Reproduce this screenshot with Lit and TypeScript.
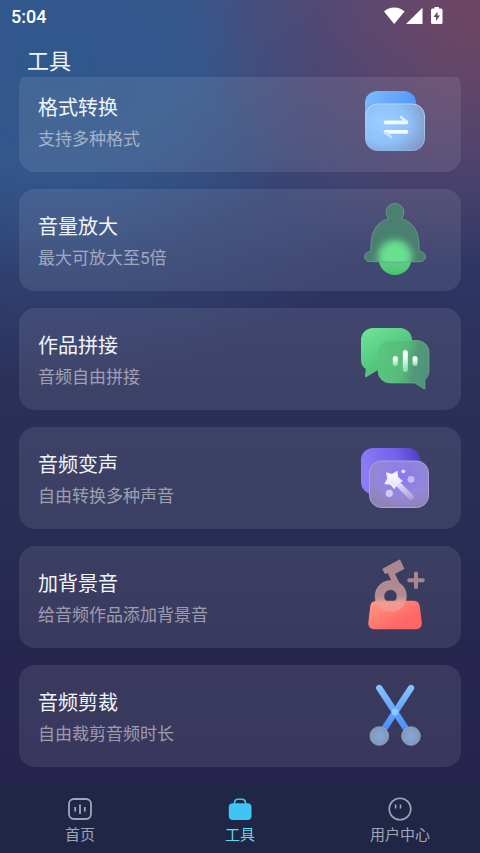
import { LitElement, html, svg, css } from "lit";
import { customElement, state } from "lit/decorators.js";
import { classMap } from "lit/directives/class-map.js";

const convertIcon = svg`
  <defs>
    <linearGradient id="cvBack" x1="0" y1="0" x2="1" y2="0.5"><stop offset="0" stop-color="#82bcff"/><stop offset="1" stop-color="#4a94f8"/></linearGradient>
    <radialGradient id="cvFront" cx="0.3" cy="0.4" r="0.8"><stop offset="0" stop-color="#9aceff"/><stop offset="0.55" stop-color="#8fc0fa"/><stop offset="1" stop-color="#8499c4"/></radialGradient>
    <linearGradient id="cvLine" x1="0" y1="0" x2="0" y2="1"><stop offset="0" stop-color="#b5d7ff"/><stop offset="1" stop-color="#8db4e8"/></linearGradient>
  </defs>
  <rect x="10" y="10" width="51" height="46" rx="12" fill="url(#cvBack)"/>
  <rect x="10.5" y="23" width="59" height="46.500" rx="12" fill="url(#cvFront)" stroke="url(#cvLine)"/>
  <path d="M30.500 41.300H51.500M30.500 50.800H51.500" stroke="#f4f9ff" stroke-width="3.800" stroke-linecap="round"/>
  <path d="M44.800 36c-.5-1 .6-1.500 1.600-1.100l6 4.500.6 1.900H49z" fill="#deedff"/>
  <path d="M37.200 56.100c.5 1-.6 1.500-1.600 1.100l-6-4.500-.6-1.900H33z" fill="#cde4ff"/>`;

const bellShape =
  "M15.600 51.500L16.300 41C17.300 29 24 21 33.800 18.700A8.900 8.900 0 1 1 46.200 18.700C56 21 62.700 29 63.700 41L64.400 51.500C72.500 52 72 61 66 61.500Q40 63 14 61.500C8 61 7.500 52 15.600 51.500z";

const bellIcon = svg`
  <defs>
    <clipPath id="bellClip"><path d=${bellShape}/></clipPath>
    <filter id="soft" x="-50%" y="-50%" width="200%" height="200%"><feGaussianBlur stdDeviation="3.500"/></filter>
    <linearGradient id="ball" x1="0" y1="0" x2="0" y2="1"><stop offset="0" stop-color="#70eb94"/><stop offset="1" stop-color="#4cc072"/></linearGradient>
  </defs>
  <circle cx="40" cy="58.700" r="16.300" fill="url(#ball)"/>
  <g clip-path="url(#bellClip)">
    <rect width="80" height="66" fill="#4a806f"/>
    <circle cx="40" cy="57" r="17" fill="#68e08f" filter="url(#soft)"/>
  </g>
  <path d=${bellShape} stroke="#6d9f94" stroke-width="0.800"/>`;

const joinIcon = svg`
  <defs>
    <linearGradient id="jnBack" x1="0" y1="0" x2="0.7" y2="1"><stop offset="0" stop-color="#6fe69a"/><stop offset="1" stop-color="#45b46f"/></linearGradient>
    <linearGradient id="jnFront" x1="0" y1="0" x2="1" y2="0.2"><stop offset="0" stop-color="#58c87c"/><stop offset="0.55" stop-color="#57bb7b"/><stop offset="0.8" stop-color="#51997a"/><stop offset="1" stop-color="#51937a"/></linearGradient>
    <linearGradient id="jnBar" x1="0" y1="0" x2="0" y2="1"><stop offset="0.3" stop-color="#f6fff9"/><stop offset="1" stop-color="#8ad9a6"/></linearGradient>
  </defs>
  <path d="M18 9h27a12 12 0 0 1 12 12v30H23L11.500 58c-1 .5-1.500 0-1.500-1l.8-7C7.500 48 6 45 6 41V21A12 12 0 0 1 18 9z" fill="url(#jnBack)"/>
  <path d="M35 21.500h27a12 12 0 0 1 12 12V51c0 4-1.500 7.500-4.300 10l.4 8c0 1-.6 1.200-1.400.7L60 64H35a12 12 0 0 1-12-12V33.500a12 12 0 0 1 12-12z" fill="url(#jnFront)" stroke="#62c888" stroke-width="0.600"/>
  <rect x="37.800" y="37" width="5" height="10" rx="2.500" fill="url(#jnBar)"/>
  <rect x="47.800" y="31" width="5" height="22" rx="2.500" fill="url(#jnBar)"/>
  <rect x="57.500" y="37" width="5" height="10" rx="2.500" fill="url(#jnBar)"/>`;

const voiceIcon = svg`
  <defs>
    <linearGradient id="vcBack" x1="0" y1="0.3" x2="1" y2="0"><stop offset="0" stop-color="#8c7cf8"/><stop offset="0.6" stop-color="#7461ea"/><stop offset="1" stop-color="#4b3ac0"/></linearGradient>
    <radialGradient id="vcFront" cx="0.55" cy="0.3" r="0.75"><stop offset="0" stop-color="#8a7aee"/><stop offset="0.6" stop-color="#9487d8"/><stop offset="1" stop-color="#8d83b4"/></radialGradient>
    <linearGradient id="wand" gradientUnits="userSpaceOnUse" x1="40" y1="43" x2="58" y2="61"><stop offset="0" stop-color="#f0ebff"/><stop offset="1" stop-color="#a99ddb"/></linearGradient>
    <linearGradient id="star" x1="0" y1="0" x2="0" y2="1"><stop offset="0" stop-color="#ffffff"/><stop offset="1" stop-color="#e2dbfc"/></linearGradient>
  </defs>
  <rect x="6" y="10" width="59" height="46" rx="12" fill="url(#vcBack)"/>
  <rect x="14.500" y="23" width="59" height="46.500" rx="12" fill="url(#vcFront)" stroke="#aaa0dc"/>
  <path d="M42 45L56 59" stroke="url(#wand)" stroke-width="5.500" stroke-linecap="round"/>
  <path d="M42 33.700L42.500 39.200 46.800 43 41.500 45 39.400 50.200 35.700 46 30.200 45.500 33 40.700 31.800 35.300 37.200 36.600z" fill="url(#star)" stroke="#f1edff" stroke-width="1.400" stroke-linejoin="round"/>
  <circle cx="48.300" cy="33.300" r="1.900" fill="#e6e1ff"/>
  <circle cx="56" cy="41.300" r="3.400" fill="#c5bcf3"/>
  <circle cx="34.300" cy="55.300" r="3.600" fill="#d3cbf5"/>`;

const musicIcon = svg`
  <defs>
    <linearGradient id="msBase" x1="0" y1="0" x2="0.7" y2="0.7"><stop offset="0" stop-color="#ff9d85"/><stop offset="1" stop-color="#ff6664"/></linearGradient>
    <linearGradient id="msNote" gradientUnits="userSpaceOnUse" x1="0" y1="3" x2="0" y2="55"><stop offset="0" stop-color="#ab858f"/><stop offset="0.700" stop-color="#b58b93"/><stop offset="0.820" stop-color="#f29b94"/><stop offset="1" stop-color="#ff9089"/></linearGradient>
  </defs>
  <path d="M22 43.800h36c4.500 0 6.300 2.200 6.900 6L66.700 65c.5 5-2 7.300-6.500 7.300H20c-4.700 0-7.200-2.600-6.600-7.300l1.800-15.200C15.800 46 17.500 43.800 22 43.800z" fill="url(#msBase)"/>
  <path fill-rule="evenodd" d="M27.700 12L44.700 2.800 49 11.800 39.500 16.700 44 25.800a15.700 15.700 0 1 1-12.300-1.800l5-.5-3.800-8-2.700 1.200zM35.500 32.600a6.600 6.600 0 1 0 0 13.200 6.600 6.600 0 0 0 0-13.200z" fill="url(#msNote)" stroke="#c8a0a4" stroke-width="0.500"/>
  <path d="M61 16.500V30M54.200 23.200H67.800" stroke="#ac858f" stroke-width="4" stroke-linecap="round"/>`;

const cutIcon = svg`
  <defs>
    <linearGradient id="ctBlade" gradientUnits="userSpaceOnUse" x1="0" y1="10" x2="0" y2="56"><stop offset="0" stop-color="#85c2ff"/><stop offset="1" stop-color="#448df5"/></linearGradient>
    <radialGradient id="ctRing"><stop offset="0" stop-color="#84a8dc"/><stop offset="1" stop-color="#8296b8"/></radialGradient>
  </defs>
  <path d="M24.300 12L52.500 55M56 12L27.800 55" stroke="url(#ctBlade)" stroke-width="6.400" stroke-linecap="round"/>
  <circle cx="40" cy="36" r="3.400" fill="#8fc8ff"/>
  <circle cx="24.300" cy="60" r="9.300" fill="url(#ctRing)" stroke="#94a9c8" stroke-width="0.800"/>
  <circle cx="56" cy="60" r="9.300" fill="url(#ctRing)" stroke="#94a9c8" stroke-width="0.800"/>`;

const tools = [
  { name: "格式转换", note: "支持多种格式", icon: convertIcon },
  { name: "音量放大", note: "最大可放大至5倍", icon: bellIcon },
  { name: "作品拼接", note: "音频自由拼接", icon: joinIcon },
  { name: "音频变声", note: "自由转换多种声音", icon: voiceIcon },
  { name: "加背景音", note: "给音频作品添加背景音", icon: musicIcon },
  { name: "音频剪裁", note: "自由裁剪音频时长", icon: cutIcon },
];

const tabs = [
  {
    id: "home",
    label: "首页",
    icon: svg`<rect x="2" y="3" width="22" height="20" rx="5" fill="none" stroke="currentColor" stroke-width="1.800"/><path d="M8.200 11v4.500M13 8.500v9.500M17.800 11v4.500" stroke="currentColor" stroke-width="1.800"/>`,
  },
  {
    id: "tools",
    label: "工具",
    icon: svg`<path d="M7.500 8.500V6.500a3.500 3.500 0 0 1 3.500-3.300h4a3.500 3.500 0 0 1 3.500 3.300v2" fill="none" stroke="currentColor" stroke-width="1.600"/><rect x="1.800" y="7.200" width="22.700" height="16.800" rx="4" fill="currentColor"/>`,
  },
  {
    id: "user",
    label: "用户中心",
    icon: svg`<circle cx="13" cy="13" r="10.800" fill="none" stroke="currentColor" stroke-width="1.600"/><path d="M8.600 8.500v4M13.500 8.500v4" stroke="currentColor" stroke-width="1.600"/>`,
  },
];

@customElement("app-root")
export class AppRoot extends LitElement {
  @state() current = "tools";

  static styles = css`
    :host {
      display: flex;
      flex-direction: column;
      box-sizing: border-box;
      min-height: 100vh;
      color: #f0f4fb;
      font-family: Roboto, "Noto Sans CJK SC", sans-serif;
      background:
        radial-gradient(ellipse 60% 30% at 100% 2%, rgba(116, 66, 92, 0.8), rgba(106, 66, 98, 0.4) 50%, rgba(80, 60, 110, 0) 100%),
        radial-gradient(ellipse 80% 38% at 12% 7%, #2f588c 0%, rgba(50, 88, 142, 0.9) 35%, rgba(48, 74, 124, 0.5) 68%, rgba(44, 50, 98, 0) 100%),
        linear-gradient(#57507f 0%, #414574 17%, #2e3664 31%, #2c3059 45%, #282d54 62%, #27264f 76%, #26234c 100%);
    }
    .status {
      display: flex;
      align-items: center;
      justify-content: space-between;
      height: 32px;
      padding: 0 36px 0 11px;
      font-size: 18px;
      font-weight: 500;
      color: #fff;
    }
    .signals {
      display: block;
      width: 60px;
      height: 20px;
    }
    .title {
      margin: 0;
      padding: 15px 27px 0;
      font-size: 22px;
      line-height: 30px;
      font-weight: 400;
    }
    .scroller {
      flex: 1;
      overflow: hidden;
      padding: 0 19px 17px;
    }
    .list {
      display: flex;
      flex-direction: column;
      gap: 17px;
      margin: -7px 0 0;
      padding: 0;
      list-style: none;
    }
    .card {
      display: flex;
      align-items: center;
      justify-content: space-between;
      width: 100%;
      padding: 11px 26px 11px 19px;
      border: 0;
      border-radius: 16px;
      background: rgba(255, 255, 255, 0.09);
      color: inherit;
      font: inherit;
      text-align: left;
      cursor: pointer;
    }
    .text {
      padding-top: 6px;
    }
    .name,
    .note {
      display: block;
    }
    .name {
      font-size: 20px;
      line-height: 30px;
    }
    .note {
      font-size: 17px;
      line-height: 32px;
      color: rgba(255, 255, 255, 0.5);
    }
    .art {
      display: block;
      flex: none;
      width: 80px;
      height: 80px;
      fill: none;
    }
    .tabs {
      display: grid;
      grid-template-columns: repeat(3, 1fr);
      padding: 12px 0 6px;
      background: #202645;
    }
    .tab {
      display: flex;
      flex-direction: column;
      align-items: center;
      gap: 1px;
      color: #a0a6b8;
      font-size: 15px;
      line-height: 24px;
      text-decoration: none;
    }
    .tab.active {
      color: #60dcec;
    }
    .glyph {
      display: block;
      width: 26px;
      height: 26px;
    }
    .active .glyph {
      color: #3fc4f4;
    }
  `;

  render() {
    return html`
      <div class="status">
        <span>5:04</span>
        <svg class="signals" viewBox="0 0 60 20" fill="#fff" aria-hidden="true">
          <path d="M0 5.500C5.500.3 15 .3 20.500 5.500L10.200 18z" />
          <path d="M22 18L38.500 1.800V18z" />
          <path fill-rule="evenodd" d="M50.500 1h4.500v1.500h2a1.500 1.500 0 0 1 1.500 1.500v12.500A1.500 1.500 0 0 1 57 18h-8.500a1.500 1.500 0 0 1-1.500-1.500V4a1.500 1.500 0 0 1 1.500-1.500h2zM53.500 5.500l-4 5.500h2.500v4l4-5.500h-2.500z" />
        </svg>
      </div>
      <h1 class="title">工具</h1>
      <main class="scroller">
        <ul class="list">
          ${tools.map(
            (t) => html`<li>
              <button class="card" type="button">
                <span class="text"><span class="name">${t.name}</span><span class="note">${t.note}</span></span>
                <svg class="art" viewBox="0 0 80 80" aria-hidden="true">${t.icon}</svg>
              </button>
            </li>`
          )}
        </ul>
      </main>
      <nav class="tabs">
        ${tabs.map(
          (t) => html`<a
            class=${classMap({ tab: true, active: t.id === this.current })}
            href="#${t.id}"
            @click=${() => (this.current = t.id)}
          >
            <svg class="glyph" viewBox="0 0 26 26" aria-hidden="true">${t.icon}</svg>
            <span>${t.label}</span>
          </a>`
        )}
      </nav>
    `;
  }
}
